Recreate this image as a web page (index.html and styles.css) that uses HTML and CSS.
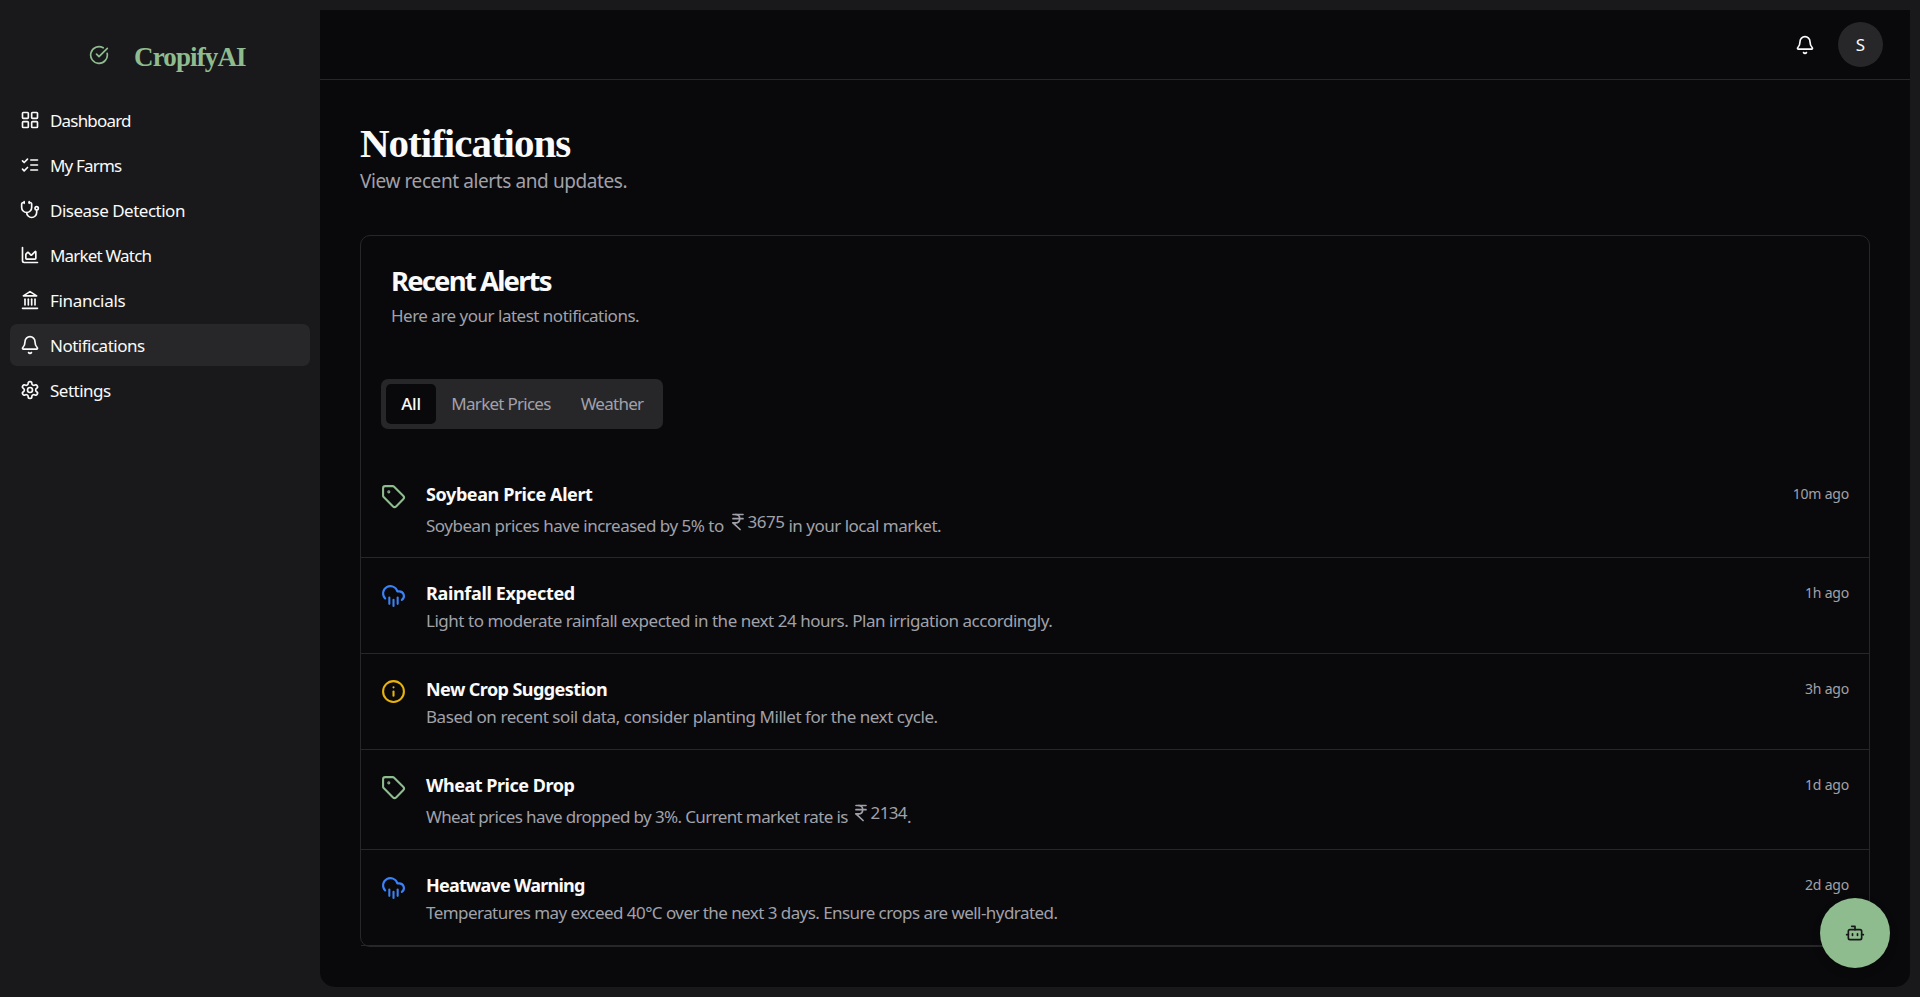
FILE: index.html
```html
<!DOCTYPE html>
<html lang="en">
<head>
<meta charset="utf-8">
<title>Notifications - CropifyAI</title>
<link rel="stylesheet" href="styles.css">
</head>
<body>
<svg class="sprite" xmlns="http://www.w3.org/2000/svg">
  <symbol id="bell" viewBox="0 0 24 24"><path d="M10.268 21a2 2 0 0 0 3.464 0"/><path d="M3.262 15.326A1 1 0 0 0 4 17h16a1 1 0 0 0 .74-1.673C19.41 13.956 18 12.499 18 8A6 6 0 0 0 6 8c0 4.499-1.411 5.956-2.738 7.326"/></symbol>
  <symbol id="tag" viewBox="0 0 24 24"><path d="M12.586 2.586A2 2 0 0 0 11.172 2H4a2 2 0 0 0-2 2v7.172a2 2 0 0 0 .586 1.414l8.704 8.704a2.426 2.426 0 0 0 3.42 0l6.58-6.58a2.426 2.426 0 0 0 0-3.42z"/><circle cx="7.5" cy="7.5" r=".5" fill="currentColor"/></symbol>
  <symbol id="rain" viewBox="0 0 24 24"><path d="M4 14.899A7 7 0 1 1 15.71 8h1.79a4.5 4.5 0 0 1 2.5 8.242"/><path d="M16 14v6"/><path d="M8 14v6"/><path d="M12 16v6"/></symbol>
  <symbol id="rupee" viewBox="0 0 24 24"><path d="M6 3h12"/><path d="M6 8h12"/><path d="m6 13 8.5 8"/><path d="M6 13h3"/><path d="M9 13c6.667 0 6.667-10 0-10"/></symbol>
</svg>
<div class="app">
  <aside class="sidebar">
    <div class="brand">
      <svg class="icon brand-icon" viewBox="0 0 24 24"><path d="M21.801 10A10 10 0 1 1 17 3.335"/><path d="m9 11 3 3L22 4"/></svg>
      <span class="brand-name">CropifyAI</span>
    </div>
    <nav class="nav">
      <a class="nav-item tight"><svg class="icon" viewBox="0 0 24 24"><rect width="7" height="7" x="3" y="3" rx="1"/><rect width="7" height="7" x="14" y="3" rx="1"/><rect width="7" height="7" x="14" y="14" rx="1"/><rect width="7" height="7" x="3" y="14" rx="1"/></svg><span>Dashboard</span></a>
      <a class="nav-item tight"><svg class="icon" viewBox="0 0 24 24"><path d="m3 17 2 2 4-4"/><path d="m3 7 2 2 4-4"/><path d="M13 6h8"/><path d="M13 12h8"/><path d="M13 18h8"/></svg><span>My Farms</span></a>
      <a class="nav-item"><svg class="icon" viewBox="0 0 24 24"><path d="M11 2v2"/><path d="M5 2v2"/><path d="M5 3H4a2 2 0 0 0-2 2v4a6 6 0 0 0 12 0V5a2 2 0 0 0-2-2h-1"/><path d="M8 15a6 6 0 0 0 12 0v-3"/><circle cx="20" cy="10" r="2"/></svg><span>Disease Detection</span></a>
      <a class="nav-item tight"><svg class="icon" viewBox="0 0 24 24"><path d="M3 3v16a2 2 0 0 0 2 2h16"/><path d="M7 11.207a.5.5 0 0 1 .146-.353l2-2a.5.5 0 0 1 .708 0l3.292 3.292a.5.5 0 0 0 .708 0l4.292-4.292a.5.5 0 0 1 .854.353V16a1 1 0 0 1-1 1H8a1 1 0 0 1-1-1z"/></svg><span>Market Watch</span></a>
      <a class="nav-item loose"><svg class="icon" viewBox="0 0 24 24"><path d="M3 22h18"/><path d="M6 18v-7"/><path d="M10 18v-7"/><path d="M14 18v-7"/><path d="M18 18v-7"/><path d="m12 2 8 5H4z"/></svg><span>Financials</span></a>
      <a class="nav-item active"><svg class="icon"><use href="#bell"/></svg><span>Notifications</span></a>
      <a class="nav-item"><svg class="icon" viewBox="0 0 24 24"><path d="M12.22 2h-.44a2 2 0 0 0-2 2v.18a2 2 0 0 1-1 1.73l-.43.25a2 2 0 0 1-2 0l-.15-.08a2 2 0 0 0-2.73.73l-.22.38a2 2 0 0 0 .73 2.73l.15.1a2 2 0 0 1 1 1.72v.51a2 2 0 0 1-1 1.74l-.15.09a2 2 0 0 0-.73 2.73l.22.38a2 2 0 0 0 2.73.73l.15-.08a2 2 0 0 1 2 0l.43.25a2 2 0 0 1 1 1.73V20a2 2 0 0 0 2 2h.44a2 2 0 0 0 2-2v-.18a2 2 0 0 1 1-1.73l.43-.25a2 2 0 0 1 2 0l.15.08a2 2 0 0 0 2.73-.73l.22-.39a2 2 0 0 0-.73-2.73l-.15-.08a2 2 0 0 1-1-1.74v-.5a2 2 0 0 1 1-1.74l.15-.09a2 2 0 0 0 .73-2.73l-.22-.38a2 2 0 0 0-2.73-.73l-.15.08a2 2 0 0 1-2 0l-.43-.25a2 2 0 0 1-1-1.73V4a2 2 0 0 0-2-2z"/><circle cx="12" cy="12" r="3"/></svg><span>Settings</span></a>
    </nav>
  </aside>
  <main class="panel">
    <header class="topbar">
      <svg class="icon top-bell"><use href="#bell"/></svg>
      <span class="avatar">S</span>
    </header>
    <div class="content">
      <h1 class="page-title">Notifications</h1>
      <p class="page-sub">View recent alerts and updates.</p>
      <section class="card">
        <h2 class="card-title">Recent Alerts</h2>
        <p class="card-sub">Here are your latest notifications.</p>
        <div class="tabs">
          <span class="tab selected">All</span>
          <span class="tab market">Market Prices</span>
          <span class="tab weather">Weather</span>
        </div>
        <ul class="alerts">
          <li class="alert priced soybean">
            <svg class="icon alert-icon green"><use href="#tag"/></svg>
            <div class="alert-body"><h3 class="alert-title">Soybean Price Alert</h3><p class="alert-text">Soybean prices have increased by 5% to <span class="price"><svg class="icon"><use href="#rupee"/></svg>3675</span> in your local market.</p></div>
            <time class="ago">10m ago</time>
          </li>
          <li class="alert rainfall">
            <svg class="icon alert-icon blue"><use href="#rain"/></svg>
            <div class="alert-body"><h3 class="alert-title">Rainfall Expected</h3><p class="alert-text">Light to moderate rainfall expected in the next 24 hours. Plan irrigation accordingly.</p></div>
            <time class="ago">1h ago</time>
          </li>
          <li class="alert suggestion">
            <svg class="icon alert-icon yellow" viewBox="0 0 24 24"><circle cx="12" cy="12" r="10"/><path d="M12 16v-4"/><path d="M12 8h.01"/></svg>
            <div class="alert-body"><h3 class="alert-title">New Crop Suggestion</h3><p class="alert-text">Based on recent soil data, consider planting Millet for the next cycle.</p></div>
            <time class="ago">3h ago</time>
          </li>
          <li class="alert priced wheat">
            <svg class="icon alert-icon green"><use href="#tag"/></svg>
            <div class="alert-body"><h3 class="alert-title">Wheat Price Drop</h3><p class="alert-text">Wheat prices have dropped by 3%. Current market rate is <span class="price"><svg class="icon"><use href="#rupee"/></svg>2134</span>.</p></div>
            <time class="ago">1d ago</time>
          </li>
          <li class="alert heatwave">
            <svg class="icon alert-icon blue"><use href="#rain"/></svg>
            <div class="alert-body"><h3 class="alert-title">Heatwave Warning</h3><p class="alert-text">Temperatures may exceed 40°C over the next 3 days. Ensure crops are well-hydrated.</p></div>
            <time class="ago">2d ago</time>
          </li>
        </ul>
      </section>
    </div>
  </main>
</div>
<button class="chat" aria-label="Assistant"><svg class="icon" viewBox="0 0 24 24"><path d="M12 8V4H8"/><rect width="16" height="12" x="4" y="8" rx="2"/><path d="M2 14h2"/><path d="M20 14h2"/><path d="M15 13v2"/><path d="M9 13v2"/></svg></button>
</body>
</html>
```
FILE: styles.css
```css
* { box-sizing: border-box; margin: 0; padding: 0; }
body {
  background: #19191b;
  color: #fafafa;
  font-family: "Noto Sans", sans-serif;
  font-size: 17px;
  height: 997px;
  overflow: hidden;
}
.sprite { display: none; }
.icon {
  width: 20px; height: 20px; flex: none;
  fill: none; stroke: currentColor; stroke-width: 2;
  stroke-linecap: round; stroke-linejoin: round;
}
.app { display: flex; height: 997px; }
.sidebar { width: 320px; padding: 10px; }
.brand { display: flex; align-items: center; height: 89px; padding-left: 79px; color: #8fbc8f; }
.brand-name {
  margin: 4px 0 0 25px;
  font: bold 27px/36px "Liberation Serif", serif;
  letter-spacing: -0.87px;
}
.nav { display: flex; flex-direction: column; gap: 3px; }
.nav-item {
  display: flex; align-items: center; gap: 10px;
  height: 42px; padding: 0 10px; border-radius: 7px;
  font-size: 17px; letter-spacing: -0.5px; white-space: nowrap;
}
.nav-item.tight { letter-spacing: -0.82px; }
.nav-item.loose { letter-spacing: -0.3px; }
.nav-item.active { background: #27272a; }
.panel {
  width: 1590px; height: 977px; margin-top: 10px;
  background: #09090b; border-radius: 0 0 15px 15px;
}
.topbar {
  display: flex; justify-content: flex-end; align-items: center; gap: 23px;
  height: 70px; padding: 0 27px 0 0; border-bottom: 1px solid #27272a;
}
.avatar {
  width: 45px; height: 45px; border-radius: 50%; background: #27272a;
  display: flex; align-items: center; justify-content: center; font-size: 17px;
}
.content { padding: 39px 40px 40px; }
.page-title { font: bold 41px/48px "Liberation Serif", serif; letter-spacing: -1px; }
.page-sub { font-size: 19px; line-height: 28px; color: #a1a1aa; letter-spacing: -0.4px; }
.card {
  margin-top: 40px; height: 712px; border: 1px solid #27272a; border-radius: 10px;
  padding-top: 25px;
}
.card-title { padding-left: 30px; font-size: 27.5px; line-height: 40px; letter-spacing: -1.85px; }
.card-sub { padding: 1px 0 0 30px; font-size: 17px; line-height: 28px; color: #a1a1aa; letter-spacing: -0.5px; }
.tabs {
  display: inline-flex; margin: 49px 0 0 20px; padding: 5px; height: 50px;
  background: #27272a; border-radius: 7px; vertical-align: top;
}
.tab {
  display: flex; align-items: center; justify-content: center; height: 40px; padding-bottom: 2px;
  border-radius: 5px; font-size: 17px; color: #a1a1aa; letter-spacing: -0.73px; white-space: nowrap;
}
.tab.selected { width: 50px; background: #09090b; color: #fafafa; letter-spacing: -0.3px; font-weight: 500; }
.tab.market { width: 130px; }
.tab.weather { width: 92px; }
.alerts { list-style: none; margin-top: 29px; }
.alert {
  display: flex; height: 96px; padding: 20px 20px 0;
  border-bottom: 1px solid #27272a;
}
.alert.priced { height: 100px; }
.alert.soybean { padding-top: 21px; }
.alert-icon { width: 25px; height: 25px; margin-top: 5px; }
.green { color: #8fbc8f; }
.blue { color: #3b82f6; }
.yellow { color: #eab308; }
.alert-body { flex: 1; margin-left: 20px; padding-top: 1px; }
.alert-title { font-size: 18px; line-height: 28px; letter-spacing: -0.4px; }
.alert-text { padding-top: 1px; font-size: 17px; line-height: 26px; color: #a1a1aa; letter-spacing: -0.5px; white-space: nowrap; }
.price { display: inline-flex; align-items: center; }
.wheat .price { margin-left: -1px; }
.rainfall .alert-title { letter-spacing: -0.34px; }
.rainfall .alert-text { letter-spacing: -0.47px; }
.suggestion .alert-title { letter-spacing: -0.57px; }
.suggestion .alert-text { letter-spacing: -0.445px; }
.wheat .alert-title { letter-spacing: -0.47px; }
.wheat .alert-text { letter-spacing: -0.62px; }
.heatwave .alert-title { letter-spacing: -0.78px; }
.heatwave .alert-text { letter-spacing: -0.555px; }
.ago { font-size: 14px; line-height: 20px; color: #a1a1aa; letter-spacing: -0.2px; padding-top: 5px; }
.chat {
  position: fixed; left: 1820px; top: 898px; width: 70px; height: 70px;
  border: 0; border-radius: 50%; background: #8fbc8f; color: #18181b;
  display: flex; align-items: center; justify-content: center;
  box-shadow: 0 4px 8px rgba(0, 0, 0, .2);
}
```
